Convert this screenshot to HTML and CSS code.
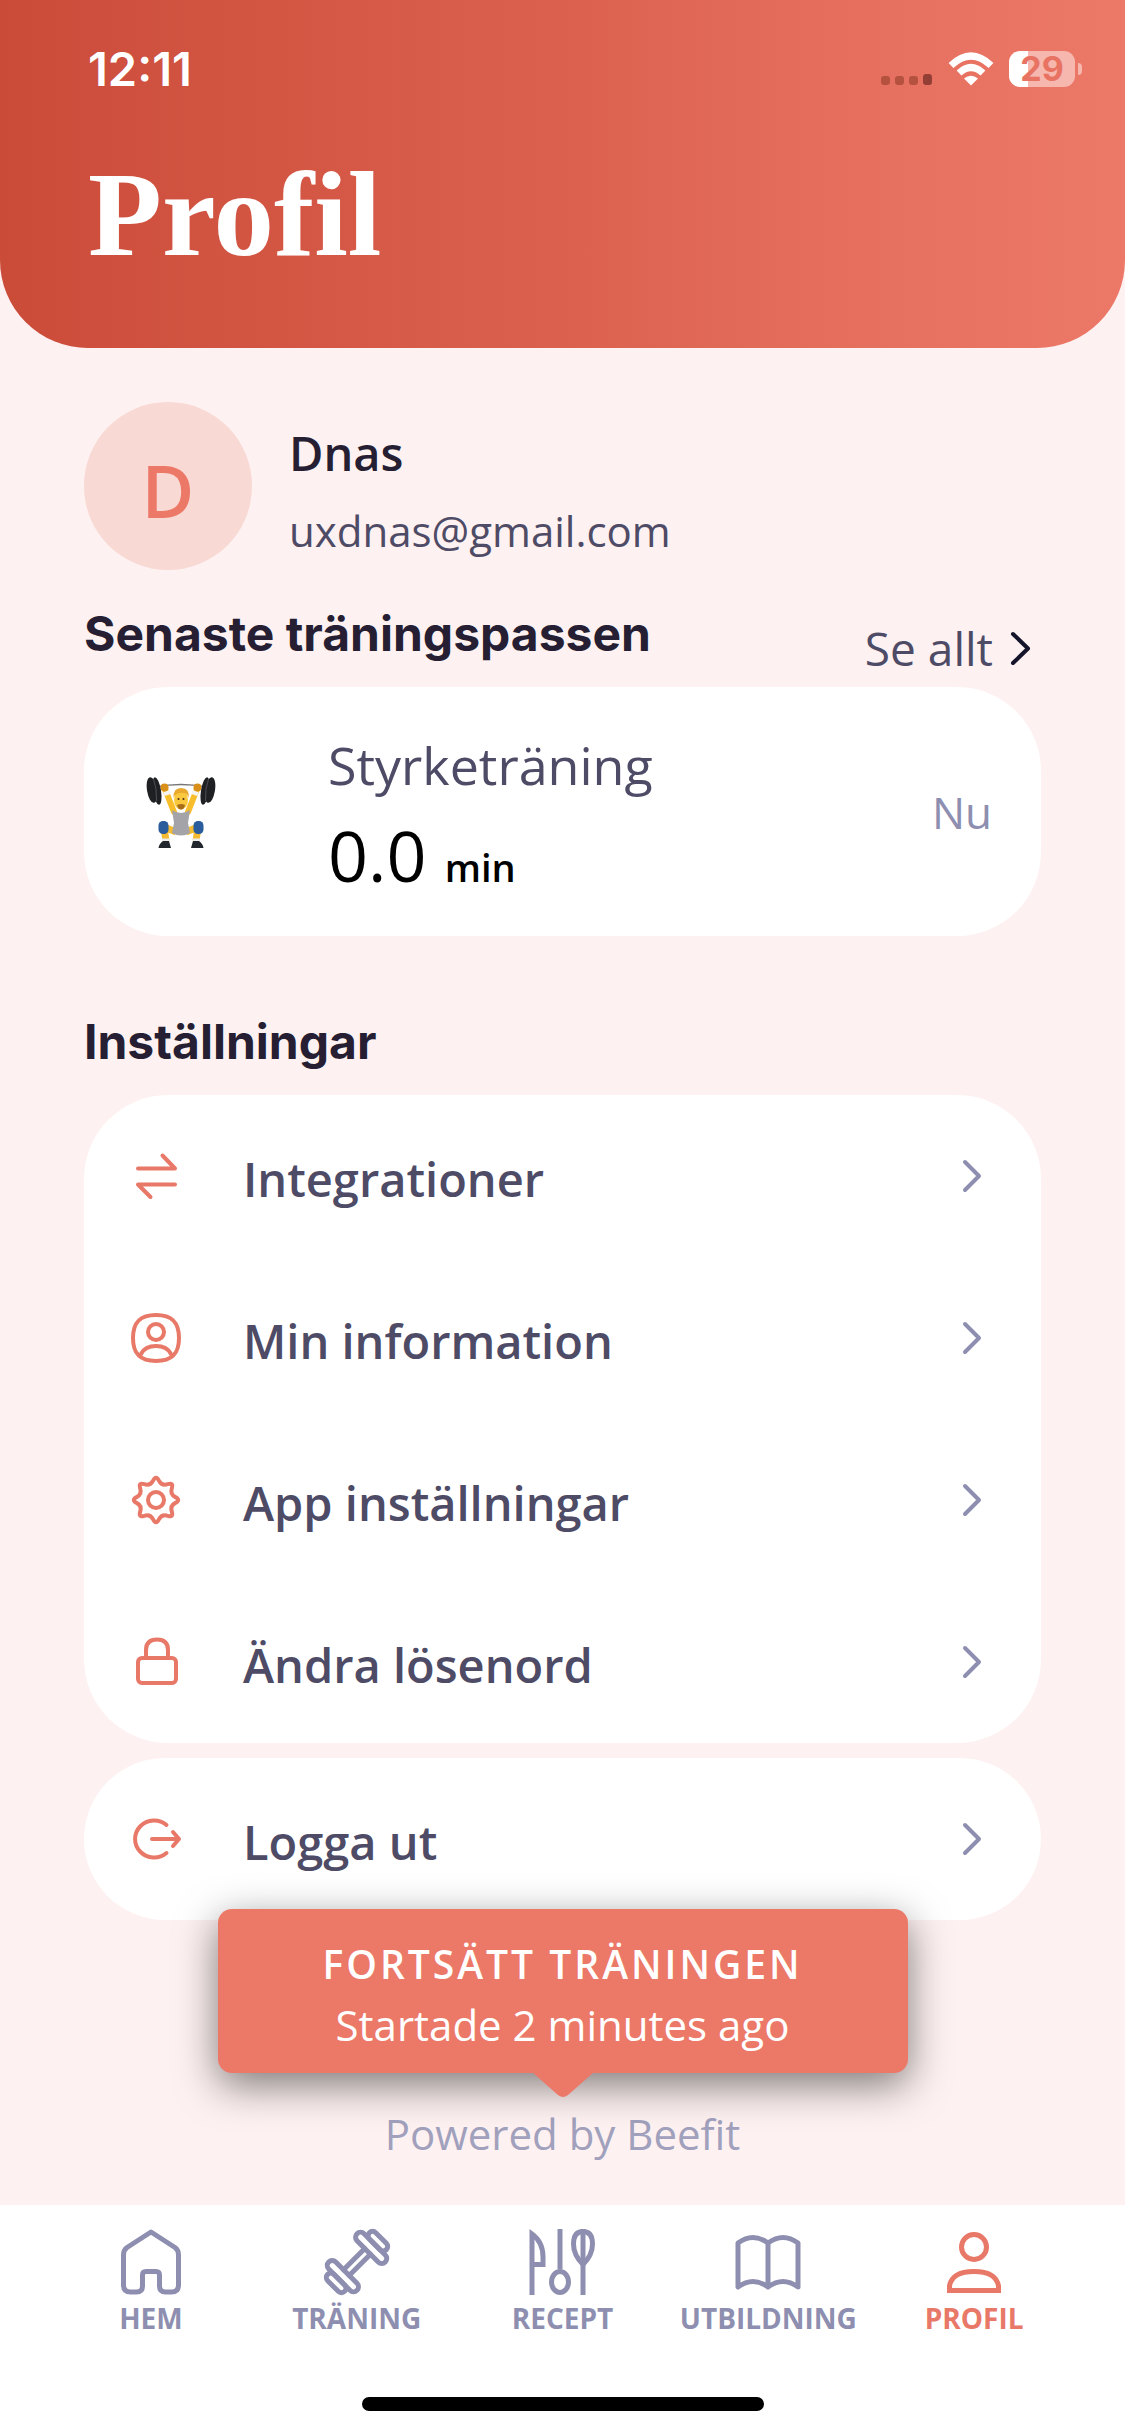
FILE: index.html
```html
<!DOCTYPE html>
<html lang="sv">
<head>
<meta charset="utf-8">
<meta name="viewport" content="width=device-width, initial-scale=1">
<title>Profil</title>
<link rel="stylesheet" href="styles.css">
</head>
<body>
<div class="app">
  <header class="hero">
    <div class="status">
      <time class="clock">12:11</time>
      <div class="indicators">
        <svg class="signal" width="52" height="36" viewBox="0 0 52 36" aria-hidden="true">
          <g fill="#b5523f"><rect x="0" y="25" width="9" height="9" rx="3"/><rect x="14" y="25" width="9" height="9" rx="3"/><rect x="28" y="25" width="9" height="9" rx="3"/></g>
          <rect x="42" y="23" width="9" height="11" rx="3" fill="#943f35"/>
        </svg>
        <svg class="wifi" width="46" height="36" viewBox="0 0 46 36" aria-hidden="true">
          <g fill="none" stroke="#fff" stroke-width="7"><path d="M3 14.5Q23 -4.500 43 14.500"/><path d="M11 22Q23 11 35 22"/></g>
          <path d="M16 27.500Q23 22 30 27.500L23 34.500Z" fill="#fff"/>
        </svg>
        <div class="battery"><span class="battery-level">29</span></div>
      </div>
    </div>
    <h1 class="title">Profil</h1>
  </header>

  <main class="content">
    <section class="user">
      <div class="avatar">D</div>
      <div class="user-text">
        <p class="user-name">Dnas</p>
        <p class="user-mail">uxdnas@gmail.com</p>
      </div>
    </section>

    <div class="section-head">
      <h2 class="section-title">Senaste träningspassen</h2>
      <a class="see-all" href="#pass">Se allt
        <svg width="24" height="40" viewBox="0 0 24 40" aria-hidden="true"><path d="M4 6L19 20.500L4 35" fill="none" stroke="#14142b" stroke-width="4" stroke-linecap="round" stroke-linejoin="round"/></svg>
      </a>
    </div>

    <a class="card workout" id="pass" href="#styrka">
      <svg class="lifter" width="70" height="76" viewBox="0 0 70 76" aria-hidden="true">
        <path d="M10 13Q35 8 60 13" fill="none" stroke="#777" stroke-width="1.500"/>
        <path d="M19 15L28 38M51 15L42 38" stroke="#f8bd2b" stroke-width="6" stroke-linecap="round"/>
        <path d="M18 20L24 18M52 20L46 18" stroke="#f4f4f4" stroke-width="4"/>
        <circle cx="18.500" cy="13.500" r="4" fill="#d99018"/><circle cx="51.500" cy="13.500" r="4" fill="#d99018"/>
        <path d="M30 58L18 53L20 67M40 58L52 53L50 67" fill="none" stroke="#f4ba32" stroke-width="7" stroke-linejoin="round"/>
        <path d="M26 36Q35 42 44 36L42 49L44 59Q35 64 26 59L28 49Z" fill="#a3a3a8"/>
        <ellipse cx="35" cy="26" rx="7" ry="9.500" fill="#f9c83c"/>
        <path d="M27.500 24Q27 14 35 14Q44 14 42.500 24Q41 18 35 19Q29 19 27.500 24Z" fill="#e9a92e"/>
        <path d="M31 31Q35 29 39 31Q38 35.500 35 35.500Q32 35.500 31 31Z" fill="#a86d18"/>
        <circle cx="32.500" cy="25" r="1" fill="#4a2b12"/><circle cx="37.500" cy="25" r="1" fill="#4a2b12"/>
        <rect x="12.500" y="47" width="10" height="13" rx="4.500" fill="#2b5c9b"/><rect x="47.500" y="47" width="10" height="13" rx="4.500" fill="#2b5c9b"/>
        <path d="M16 66H23M47 66H54" stroke="#ededed" stroke-width="3"/>
        <path d="M17 67H23L25 74H12.500Q13 70 17 67ZM53 67H47L45 74H57.500Q57 70 53 67Z" fill="#22262d"/>
        <g fill="#1f2023"><ellipse cx="6" cy="16" rx="5" ry="13" transform="rotate(-9 6 16)"/><ellipse cx="11" cy="17" rx="4" ry="14" transform="rotate(-9 11 17)"/><ellipse cx="64" cy="16" rx="5" ry="13" transform="rotate(9 64 16)"/><ellipse cx="59" cy="17" rx="4" ry="14" transform="rotate(9 59 17)"/></g>
        <path d="M7.500 5Q11 14 10.500 27M62.500 5Q59 14 59.500 27" fill="none" stroke="#4c4e53" stroke-width="1"/>
      </svg>
      <div class="workout-text">
        <p class="workout-name">Styrketräning</p>
        <p class="workout-time">0.0 <span class="unit">min</span></p>
      </div>
      <span class="workout-when">Nu</span>
    </a>

    <h2 class="section-title settings-title">Inställningar</h2>

    <nav class="card menu" aria-label="Inställningar">
      <a class="row" href="#integrationer">
        <svg class="row-icon" viewBox="0 0 56 56" aria-hidden="true"><path d="M10 20.500H47L34.500 7.500M47 36.500H10L22.500 49"/></svg>
        <span class="row-label">Integrationer</span>
        <svg class="chevron" viewBox="0 0 24 40" aria-hidden="true"><path d="M4 6L18 20L4 34"/></svg>
      </a>
      <a class="row" href="#information">
        <svg class="row-icon" viewBox="0 0 56 56" aria-hidden="true"><path d="M28 5C44 5 51 12 51 28S44 51 28 51S5 44 5 28S12 5 28 5Z"/><circle cx="28" cy="22" r="8"/><path d="M13 44Q17 36 28 36T43 44"/></svg>
        <span class="row-label">Min information</span>
        <svg class="chevron" viewBox="0 0 24 40" aria-hidden="true"><path d="M4 6L18 20L4 34"/></svg>
      </a>
      <a class="row" href="#app">
        <svg class="row-icon" viewBox="-28 -28 56 56" aria-hidden="true"><circle r="8"/><path d="M-2.900 -19.400Q0 -25 2.900 -19.400Q5.700 -13.900 11.700 -15.800Q17.700 -17.700 15.800 -11.700Q13.900 -5.700 19.400 -2.900Q25 0 19.400 2.900Q13.900 5.700 15.800 11.700Q17.700 17.700 11.700 15.800Q5.700 13.900 2.900 19.400Q0 25 -2.900 19.400Q-5.700 13.900 -11.700 15.800Q-17.700 17.700 -15.800 11.700Q-13.900 5.700 -19.400 2.900Q-25 0 -19.400 -2.900Q-13.900 -5.700 -15.800 -11.700Q-17.700 -17.700 -11.700 -15.800Q-5.700 -13.900 -2.900 -19.400Z"/></svg>
        <span class="row-label">App inställningar</span>
        <svg class="chevron" viewBox="0 0 24 40" aria-hidden="true"><path d="M4 6L18 20L4 34"/></svg>
      </a>
      <a class="row" href="#losenord">
        <svg class="row-icon" viewBox="0 0 56 56" aria-hidden="true"><rect x="10" y="24" width="38" height="25" rx="4"/><path d="M18 24V16Q18 5.500 29 5.500T40 16V24"/></svg>
        <span class="row-label">Ändra lösenord</span>
        <svg class="chevron" viewBox="0 0 24 40" aria-hidden="true"><path d="M4 6L18 20L4 34"/></svg>
      </a>
    </nav>

    <nav class="card menu" aria-label="Konto">
      <a class="row" href="#logga-ut">
        <svg class="row-icon" viewBox="0 0 56 56" aria-hidden="true"><path d="M38.500 14A19 18.500 0 1 0 38.500 42M24 28H51M45 21L51 28L45 35"/></svg>
        <span class="row-label">Logga ut</span>
        <svg class="chevron" viewBox="0 0 24 40" aria-hidden="true"><path d="M4 6L18 20L4 34"/></svg>
      </a>
    </nav>

    <p class="powered">Powered by Beefit</p>
  </main>

  <footer class="bottom">
    <button class="toast" type="button">
      <span class="toast-title">FORTSÄTT TRÄNINGEN</span>
      <span class="toast-text">Startade 2 minutes ago</span>
      <svg class="toast-tip" width="62" height="26" viewBox="0 0 62 26" aria-hidden="true"><path d="M0 0H62L36 23Q31 27 26 23Z" fill="#ec7868"/></svg>
    </button>
    <nav class="tabs" aria-label="Huvudmeny">
      <a class="tab" href="#hem">
        <svg class="tab-icon" viewBox="0 0 66 66" aria-hidden="true"><path d="M33 3L9 18.500Q5.500 21 5.500 26V56Q5.500 63 12.500 63H18.500Q24.500 63 24.500 57V46Q24.500 42.500 28 42.500H38Q41.500 42.500 41.500 46V57Q41.500 63 47.500 63H53.500Q60.500 63 60.500 56V26Q60.500 21 57 18.500Z"/></svg>
        <span>HEM</span>
      </a>
      <a class="tab" href="#traning">
        <svg class="tab-icon" viewBox="0 0 66 66" aria-hidden="true"><g transform="rotate(-45 33 33)"><path d="M18 29H48M18 37H48"/><rect x="48" y="13" width="10" height="40" rx="5"/><rect x="58" y="21" width="9" height="24" rx="4.500"/><rect x="8" y="13" width="10" height="40" rx="5"/><rect x="-1" y="21" width="9" height="24" rx="4.500"/></g></svg>
        <span>TRÄNING</span>
      </a>
      <a class="tab" href="#recept">
        <svg class="tab-icon square" viewBox="0 0 66 66" aria-hidden="true"><path d="M3 66V5Q14 13 14 28V35.500H3M31 0V40M54 0V66"/><ellipse cx="31" cy="53" rx="8.500" ry="10.500"/><path d="M54 2.500C61 2.500 63.500 8 63.500 15Q63.500 26 54 35.500Q44.500 26 44.500 15C44.500 8 47 2.500 54 2.500Z"/></svg>
        <span>RECEPT</span>
      </a>
      <a class="tab" href="#utbildning">
        <svg class="tab-icon" viewBox="0 0 66 66" aria-hidden="true"><path d="M3 14Q18 3 33 14Q48 3 63 14V58Q48 47 33 58Q18 47 3 58ZM33 14V58"/></svg>
        <span>UTBILDNING</span>
      </a>
      <a class="tab active" href="#profil" aria-current="page">
        <svg class="tab-icon square" viewBox="0 0 66 66" aria-hidden="true"><circle cx="33" cy="18" r="12.500"/><path d="M8.500 61.500V57Q11 42.500 33 42.500T57.500 57V61.500Z"/></svg>
        <span>PROFIL</span>
      </a>
    </nav>
    <div class="home-bar"></div>
  </footer>
</div>
</body>
</html>
```

FILE: styles.css
```css
* {
  box-sizing: border-box;
}

body,
h1,
h2,
p {
  margin: 0;
}

body {
  background: #fef1f1;
  color: #4e4b66;
  font-family: "Open Sans", "Noto Sans", sans-serif;
}

a {
  color: inherit;
  text-decoration: none;
}

.app {
  display: flex;
  flex-direction: column;
  min-height: 100vh;
}

/* Header */

.hero {
  padding: 39px 42px 67px 88px;
  border-radius: 0 0 88px 88px;
  background: linear-gradient(90deg, #cb4b39, #db614e 50%, #e77160 80%, #ec7868);
  color: #fff;
}

.status {
  display: flex;
  align-items: center;
  justify-content: space-between;
}

.clock {
  font: 600 47px/60px Inter, sans-serif;
}

.indicators {
  display: flex;
  align-items: center;
  gap: 15px;
}

.battery {
  position: relative;
  width: 66px;
  height: 36px;
  margin-right: 8px;
  border-radius: 11px;
  background: linear-gradient(90deg, #fff 29%, #f6b7ae 29%);
  text-align: center;
}

.battery::after {
  content: "";
  position: absolute;
  top: 12px;
  right: -7px;
  width: 4px;
  height: 12px;
  border-radius: 0 6px 6px 0;
  background: #f6b7ae;
}

.battery-level {
  color: #e87363;
  font: 700 34px/36px Inter, sans-serif;
}

.title {
  margin-top: 48px;
  font: 700 121px/134px "Liberation Serif", serif;
  font-variant-ligatures: none;
}

/* Content */

.content {
  display: flex;
  flex: 1;
  flex-direction: column;
  padding: 54px 84px 44px;
}

.user {
  display: flex;
  align-items: center;
  gap: 37px;
}

.avatar {
  width: 168px;
  height: 168px;
  padding-top: 4px;
  border-radius: 50%;
  background: #f8d9d4;
  color: #ec7868;
  font-size: 72px;
  font-weight: 600;
  line-height: 168px;
  text-align: center;
}

.user-text {
  padding-top: 12px;
}

.user-name {
  color: #261f33;
  font-size: 47px;
  font-weight: 600;
  line-height: 78px;
}

.user-mail {
  font-size: 42px;
  line-height: 78px;
}

.section-head {
  display: flex;
  align-items: flex-start;
  justify-content: space-between;
  margin: 34px 0 9px;
}

.section-title {
  color: #261f33;
  font: 700 48px/60px Inter, sans-serif;
}

.see-all {
  display: flex;
  align-items: center;
  gap: 16px;
  padding: 14px 8px 0 0;
  font-size: 46px;
  line-height: 60px;
}

.card {
  border-radius: 84px;
  background: #fff;
}

.workout {
  display: flex;
  align-items: center;
  padding: 34px 49px 34px 62px;
}

.workout-text {
  flex: 1;
  margin-left: 112px;
}

.workout-name {
  font-size: 52px;
  line-height: 87px;
}

.workout-time {
  color: #000;
  font-size: 70px;
  line-height: 94px;
}

.unit {
  font-size: 38px;
  font-weight: 600;
  line-height: 1;
}

.workout-when {
  color: #8e8fb0;
  font-size: 44px;
}

.settings-title {
  margin: 76px 0 23px;
}

.menu + .menu {
  margin-top: 15px;
}

.row {
  display: flex;
  align-items: center;
  height: 162px;
  padding: 0 56px 0 44px;
}

.row-icon {
  width: 56px;
  height: 56px;
  fill: none;
  stroke: #e87867;
  stroke-width: 4;
  stroke-linecap: round;
  stroke-linejoin: round;
}

.row-label {
  flex: 1;
  margin-left: 59px;
  padding-top: 6px;
  font-size: 47px;
  font-weight: 600;
}

.chevron {
  width: 24px;
  height: 40px;
  fill: none;
  stroke: #8e8fb0;
  stroke-width: 4;
  stroke-linecap: round;
  stroke-linejoin: round;
}

.powered {
  margin-top: auto;
  color: #a1a1bd;
  font-size: 42px;
  line-height: 54px;
  text-align: center;
}

/* Bottom area */

.bottom {
  position: relative;
  padding: 24px 48px 25px;
  background: #fff;
}

.toast {
  position: absolute;
  bottom: 363px;
  left: 50%;
  display: flex;
  flex-direction: column;
  align-items: center;
  width: 690px;
  max-width: 90%;
  margin: 0;
  padding: 24px 0 18px;
  border: 0;
  border-radius: 14px;
  background: #ec7868;
  box-shadow: 0 12px 40px rgba(0, 0, 0, 0.5);
  color: #fff;
  font-family: inherit;
  transform: translateX(-50%);
}

.toast-title {
  font-size: 39px;
  font-weight: 600;
  letter-spacing: 3px;
  line-height: 61px;
}

.toast-text {
  font-size: 42px;
  line-height: 61px;
}

.toast-tip {
  position: absolute;
  top: 100%;
  left: 50%;
  margin: -1px 0 0 -31px;
}

.tabs {
  display: grid;
  grid-template-columns: repeat(5, 1fr);
}

.tab {
  display: flex;
  flex-direction: column;
  align-items: center;
  gap: 4px;
  color: #8e8fb0;
  font-size: 28px;
  font-weight: 700;
  line-height: 38px;
}

.tab.active {
  color: #e87867;
}

.tab-icon {
  width: 66px;
  height: 66px;
  overflow: visible;
  fill: none;
  stroke: currentColor;
  stroke-width: 5;
  stroke-linecap: round;
  stroke-linejoin: round;
}

.square {
  stroke-linecap: butt;
  stroke-linejoin: miter;
}

.home-bar {
  width: 402px;
  height: 14px;
  margin: 60px auto 0;
  border-radius: 7px;
  background: #000;
}
```
